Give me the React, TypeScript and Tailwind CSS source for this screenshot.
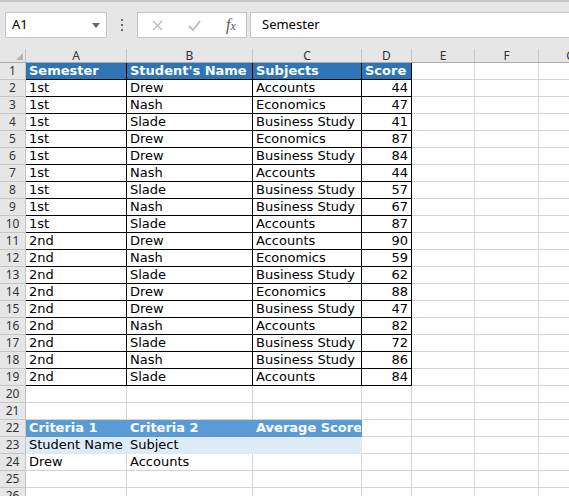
import React from "react";

const COLS = [
  { key: "A", w: "w-[101px]" },
  { key: "B", w: "w-[126px]" },
  { key: "C", w: "w-[109px]" },
  { key: "D", w: "w-[50px]" },
  { key: "E", w: "w-[63px]" },
  { key: "F", w: "w-[64px]" },
  { key: "G", w: "w-[64px]" },
];

const DATA: [string, string, string, number][] = [
  ["1st", "Drew", "Accounts", 44],
  ["1st", "Nash", "Economics", 47],
  ["1st", "Slade", "Business Study", 41],
  ["1st", "Drew", "Economics", 87],
  ["1st", "Drew", "Business Study", 84],
  ["1st", "Nash", "Accounts", 44],
  ["1st", "Slade", "Business Study", 57],
  ["1st", "Nash", "Business Study", 67],
  ["1st", "Slade", "Accounts", 87],
  ["2nd", "Drew", "Accounts", 90],
  ["2nd", "Nash", "Economics", 59],
  ["2nd", "Slade", "Business Study", 62],
  ["2nd", "Drew", "Economics", 88],
  ["2nd", "Drew", "Business Study", 47],
  ["2nd", "Nash", "Accounts", 82],
  ["2nd", "Slade", "Business Study", 72],
  ["2nd", "Nash", "Business Study", 86],
  ["2nd", "Slade", "Accounts", 84],
];

type CellInfo = {
  text?: string;
  right?: boolean;
  cls: string;
};

function cellInfo(row: number, col: number): CellInfo {
  const grid = "border-[#d4d4d4] bg-white text-black";
  if (row === 1 && col < 4) {
    const head = ["Semester", "Student's Name", "Subjects", "Score"];
    return { text: head[col], cls: "border-black bg-[#2e75b6] text-white font-bold" };
  }
  if (row >= 2 && row <= 19 && col < 4) {
    const r = DATA[row - 2];
    return { text: String(r[col]), right: col === 3, cls: "border-black bg-white text-black" };
  }
  if (row === 22 && col < 3) {
    const t = ["Criteria 1", "Criteria 2", "Average Score"];
    return { text: t[col], cls: "border-[#5b9bd5] bg-[#5b9bd5] text-white font-bold" };
  }
  if (row === 23 && col < 3) {
    const t = ["Student Name", "Subject", ""];
    return { text: t[col], cls: "border-[#ddebf7] bg-[#ddebf7] text-black" };
  }
  if (row === 24 && col < 2) {
    const t = ["Drew", "Accounts"];
    return { text: t[col], cls: grid };
  }
  return { cls: grid };
}

function FormulaBar() {
  return (
    <div className="h-[49px] shrink-0 border-t-2 border-[#c6c6c6] bg-[#e6e6e6] flex items-start pt-[10px] pl-[5px]">
      <div className="w-[102px] h-[26px] bg-white border border-[#c6c6c6] flex items-center pl-[6px] pr-[6px] justify-between">
        <span className="text-[13px] text-black" style={{ fontFamily: '"Noto Sans", sans-serif' }}>A1</span>
        <svg width="8" height="5" viewBox="0 0 8 5"><path d="M0 0h8L4 5z" fill="#666" /></svg>
      </div>
      <div className="w-[30px] h-[26px] flex flex-col items-center justify-center gap-[3px]">
        <span className="w-[2px] h-[2px] bg-[#666]" />
        <span className="w-[2px] h-[2px] bg-[#666]" />
        <span className="w-[2px] h-[2px] bg-[#666]" />
      </div>
      <div className="w-[110px] h-[26px] bg-white border border-[#c6c6c6] flex items-center">
        <div className="w-[36px] flex justify-center pl-[2px]">
          <svg width="11" height="11" viewBox="0 0 11 11"><path d="M1 1l9 9M10 1l-9 9" stroke="#bcbcbc" strokeWidth="1.4" /></svg>
        </div>
        <div className="w-[36px] flex justify-center pl-[4px]">
          <svg width="13" height="11" viewBox="0 0 13 11"><path d="M1 6l4 4 7-9" stroke="#bcbcbc" strokeWidth="1.8" fill="none" /></svg>
        </div>
        <div className="w-[36px] flex justify-center pl-[6px]">
          <span className="italic text-[16px] leading-[16px] text-[#555]" style={{ fontFamily: '"Liberation Serif", serif' }}>
            f<span className="text-[12px]">x</span>
          </span>
        </div>
      </div>
      <div className="ml-[3px] flex-1 h-[26px] bg-white border border-[#c6c6c6] border-r-0 flex items-center pl-[11px]">
        <span className="text-[13px] text-black" style={{ fontFamily: '"Noto Sans", sans-serif' }}>Semester</span>
      </div>
    </div>
  );
}

function ColumnHeaders() {
  return (
    <div className="flex h-[14px] shrink-0 bg-[#e6e6e6] border-b border-[#ababab]" style={{ fontFamily: '"Noto Sans", sans-serif' }}>
      <div className="w-[26px] shrink-0 border-r border-[#c6c6c6] relative">
        <svg className="absolute right-[2px] bottom-[2px]" width="7" height="7" viewBox="0 0 7 7"><path d="M7 0v7H0z" fill="#b4b4b4" /></svg>
      </div>
      {COLS.map((c) => (
        <div key={c.key} className={`${c.w} shrink-0 border-r border-[#c6c6c6] flex items-center justify-center text-[12px] leading-[13px] text-[#333]`}>
          {c.key}
        </div>
      ))}
    </div>
  );
}

function Row({ n }: { n: number }) {
  return (
    <div className="flex h-[17px] shrink-0">
      <div
        className="w-[26px] shrink-0 bg-[#e6e6e6] border-r border-b border-[#c6c6c6] flex items-center justify-center text-[12px] text-[#333]"
        style={{ fontFamily: '"Noto Sans", sans-serif' }}
      >
        {n}
      </div>
      {COLS.map((c, i) => {
        const info = cellInfo(n, i);
        return (
          <div
            key={c.key}
            className={`${c.w} shrink-0 border-r border-b ${info.cls} overflow-hidden whitespace-nowrap text-[13px] leading-[16px] px-[3px] ${info.right ? "text-right" : ""}`}
          >
            {info.text}
          </div>
        );
      })}
    </div>
  );
}

export default function App() {
  const rows = Array.from({ length: 26 }, (_, i) => i + 1);
  return (
    <div className="w-[569px] h-[496px] overflow-hidden bg-white flex flex-col" style={{ fontFamily: '"DejaVu Sans", Verdana, sans-serif' }}>
      <FormulaBar />
      <ColumnHeaders />
      {rows.map((n) => (
        <Row key={n} n={n} />
      ))}
    </div>
  );
}
